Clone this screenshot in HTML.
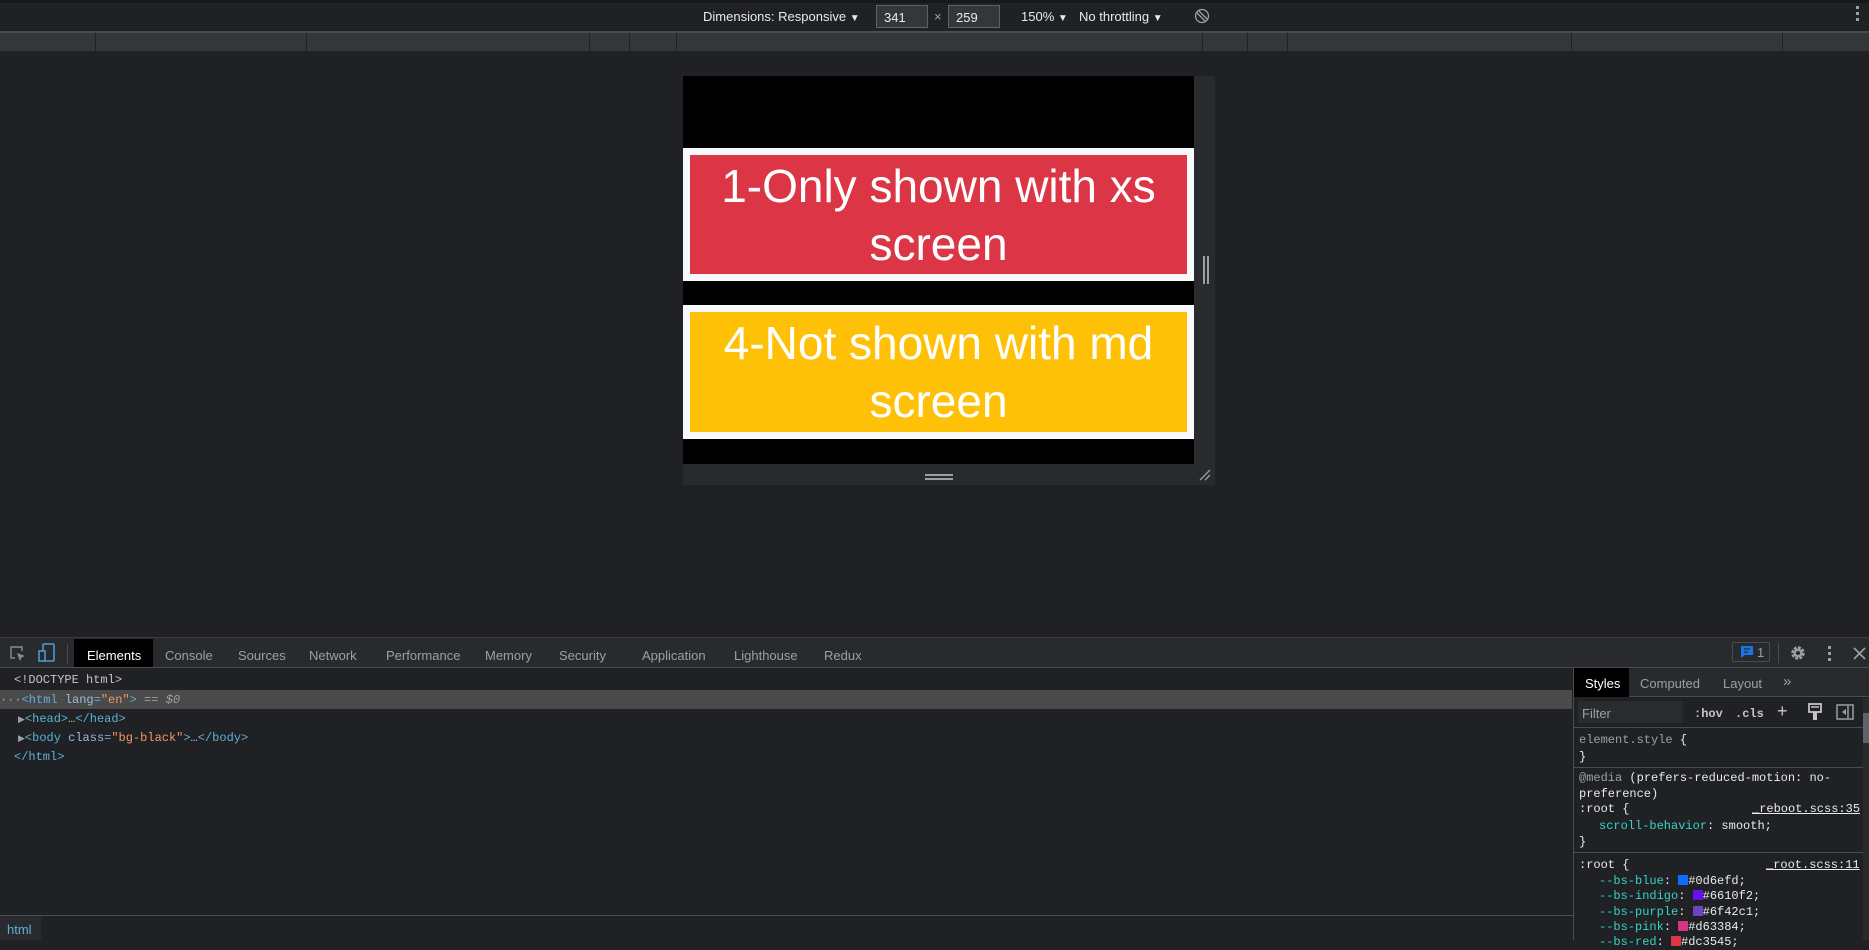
<!DOCTYPE html>
<html><head><style>
*{margin:0;padding:0;box-sizing:border-box}
body{width:1869px;height:940px;background:#202124;position:relative;overflow:hidden;font-family:"Liberation Sans",sans-serif;color:#e8eaed;font-size:13px}
.a{position:absolute;white-space:nowrap}
.m{font-family:"Liberation Mono",monospace;font-size:12px}
.tab{position:absolute;top:648px;color:#9aa0a6;font-size:13px}
.t{color:#5db0d7}.at{color:#9bbbdc}.v{color:#f29766}
.p{color:#35d4c7}
</style></head><body>
<!-- top toolbar -->
<div class="a" style="left:0;top:0;width:1869px;height:3px;background:#17181b"></div>
<div class="a" style="left:0;top:31px;width:1869px;height:2px;background:#494c50"></div>
<div class="a" style="left:703px;top:9px;font-size:13px;color:#e8eaed">Dimensions: Responsive <span style="font-size:10px">▼</span></div>
<div class="a" style="left:876px;top:5px;width:52px;height:23px;background:#35363a;border:1px solid #5f6368;padding:4px 7px;font-size:13px">341</div>
<div class="a" style="left:934px;top:9px;color:#9aa0a6">×</div>
<div class="a" style="left:948px;top:5px;width:52px;height:23px;background:#35363a;border:1px solid #5f6368;padding:4px 7px;font-size:13px">259</div>
<div class="a" style="left:1021px;top:9px">150% <span style="font-size:10px">▼</span></div>
<div class="a" style="left:1079px;top:9px">No throttling <span style="font-size:10px">▼</span></div>
<svg class="a" style="left:1194px;top:8px" width="16" height="16"><circle cx="8" cy="8" r="6.5" fill="none" stroke="#9aa0a6" stroke-width="1.3"/><path d="M3 5 L11 13 M5 3 L13 11" stroke="#9aa0a6" stroke-width="1.3"/></svg>
<div class="a" style="left:1856px;top:6px;width:3px;height:3px;background:#9aa0a6;box-shadow:0 6px 0 #9aa0a6,0 12px 0 #9aa0a6"></div>
<!-- ruler -->
<div class="a" style="left:0;top:33px;width:1869px;height:18px;background:#35363a"></div>
<div class="a" style="left:95px;top:33px;width:1px;height:18px;background:#202124"></div>
<div class="a" style="left:306px;top:33px;width:1px;height:18px;background:#202124"></div>
<div class="a" style="left:589px;top:33px;width:1px;height:18px;background:#202124"></div>
<div class="a" style="left:629px;top:33px;width:1px;height:18px;background:#202124"></div>
<div class="a" style="left:676px;top:33px;width:1px;height:18px;background:#202124"></div>
<div class="a" style="left:1202px;top:33px;width:1px;height:18px;background:#202124"></div>
<div class="a" style="left:1247px;top:33px;width:1px;height:18px;background:#202124"></div>
<div class="a" style="left:1287px;top:33px;width:1px;height:18px;background:#202124"></div>
<div class="a" style="left:1571px;top:33px;width:1px;height:18px;background:#202124"></div>
<div class="a" style="left:1782px;top:33px;width:1px;height:18px;background:#202124"></div>
<!-- viewport -->
<div class="a" style="left:683px;top:76px;width:511px;height:388px;background:#000"></div>
<div class="a" style="left:1194px;top:76px;width:21px;height:409px;background:#292a2d"></div>
<div class="a" style="left:683px;top:464px;width:532px;height:21px;background:#292a2d"></div>
<div class="a" style="left:1203px;top:256px;width:2px;height:28px;background:#9aa0a6;box-shadow:4px 0 0 #9aa0a6"></div>
<div class="a" style="left:925px;top:474px;width:28px;height:2px;background:#9aa0a6;box-shadow:0 4px 0 #9aa0a6"></div>
<svg class="a" style="left:1198px;top:468px" width="14" height="14"><path d="M2 12 L12 2 M7 12 L12 7" stroke="#9aa0a6" stroke-width="1.3"/></svg>
<div class="a" style="left:683px;top:148px;width:511px;height:133px;background:#f8f9fa"></div>
<div class="a" style="left:690px;top:155px;width:497px;height:119px;background:#dc3545;color:#fff;font-size:46px;line-height:58px;text-align:center;white-space:normal;padding:2px 20px 0">1-Only shown with xs screen</div>
<div class="a" style="left:683px;top:305px;width:511px;height:134px;background:#f8f9fa"></div>
<div class="a" style="left:690px;top:312px;width:497px;height:120px;background:#ffc107;color:#fff;font-size:46px;line-height:58px;text-align:center;white-space:normal;padding:2px 4px 0">4-Not shown with md screen</div>
<!-- devtools tab bar -->
<div class="a" style="left:0;top:637px;width:1869px;height:31px;background:#292a2d;border-top:1px solid #3c3c3c;border-bottom:1px solid #494c50"></div>
<svg class="a" style="left:9px;top:645px" width="18" height="18"><path d="M6 13H2V2H13V6" fill="none" stroke="#8a8d91" stroke-width="1.4"/><path d="M8 8 L16 11 L12.5 12.5 L11 16 Z" fill="#8a8d91"/></svg>
<svg class="a" style="left:38px;top:643px" width="18" height="20"><rect x="5" y="1" width="11" height="17" rx="1" fill="none" stroke="#4c9ee0" stroke-width="1.5"/><rect x="1" y="8" width="6" height="10" fill="#292a2d" stroke="#4c9ee0" stroke-width="1.5"/></svg>
<div class="a" style="left:67px;top:644px;width:1px;height:20px;background:#494c50"></div>
<div class="a" style="left:74px;top:639px;width:79px;height:28px;background:#000"></div>
<div class="tab" style="left:87px;color:#fff">Elements</div>
<div class="tab" style="left:165px">Console</div>
<div class="tab" style="left:238px">Sources</div>
<div class="tab" style="left:309px">Network</div>
<div class="tab" style="left:386px">Performance</div>
<div class="tab" style="left:485px">Memory</div>
<div class="tab" style="left:559px">Security</div>
<div class="tab" style="left:642px">Application</div>
<div class="tab" style="left:734px">Lighthouse</div>
<div class="tab" style="left:824px">Redux</div>
<div class="a" style="left:1732px;top:642px;width:38px;height:20px;border:1px solid #494c50;border-radius:2px"></div>
<svg class="a" style="left:1740px;top:645px" width="14" height="14"><path d="M1 1H13V10H5L1 13Z" fill="#1a73e8"/><path d="M4 4H10M4 7H8" stroke="#292a2d" stroke-width="1.3"/></svg>
<div class="a" style="left:1757px;top:645px;color:#9aa0a6">1</div>
<div class="a" style="left:1778px;top:643px;width:1px;height:20px;background:#494c50"></div>
<svg class="a" style="left:1790px;top:645px" width="16" height="16"><circle cx="8" cy="8" r="5" fill="none" stroke="#9aa0a6" stroke-width="3.5" stroke-dasharray="2.6 1.3"/><circle cx="8" cy="8" r="4.5" fill="#9aa0a6"/><circle cx="8" cy="8" r="2" fill="#292a2d"/></svg>
<div class="a" style="left:1828px;top:646px;width:3px;height:3px;background:#9aa0a6;box-shadow:0 6px 0 #9aa0a6,0 12px 0 #9aa0a6"></div>
<svg class="a" style="left:1853px;top:647px" width="13" height="13"><path d="M1 1L12 12M12 1L1 12" stroke="#9aa0a6" stroke-width="1.6"/></svg>
<!-- elements tree -->
<div class="a" style="left:0;top:690px;width:1572px;height:19px;background:#4a4a4a"></div>
<div class="a m" style="left:14px;top:673px;color:#c5c5c5">&lt;!DOCTYPE html&gt;</div>
<div class="a m" style="left:0;top:693px"><span style="color:#9aa0a6">···</span><span class="t">&lt;html </span><span class="at">lang</span><span class="t">=</span><span class="v">"en"</span><span class="t">&gt;</span><span style="color:#9aa0a6"> == <i>$0</i></span></div>
<div class="a m" style="left:18px;top:712px"><span style="color:#9aa0a6;font-size:9px">▶</span><span class="t">&lt;head&gt;</span><span style="color:#c5c5c5">…</span><span class="t">&lt;/head&gt;</span></div>
<div class="a m" style="left:18px;top:731px"><span style="color:#9aa0a6;font-size:9px">▶</span><span class="t">&lt;body </span><span class="at">class</span><span class="t">=</span><span class="v">"bg-black"</span><span class="t">&gt;</span><span style="color:#c5c5c5">…</span><span class="t">&lt;/body&gt;</span></div>
<div class="a m" style="left:14px;top:750px"><span class="t">&lt;/html&gt;</span></div>
<!-- breadcrumb -->
<div class="a" style="left:0;top:915px;width:1573px;height:1px;background:#494c50"></div>
<div class="a" style="left:0;top:916px;width:41px;height:24px;background:#292a2d"></div>
<div class="a" style="left:7px;top:922px;color:#5db0d7">html</div>
<!-- styles pane -->
<div class="a" style="left:1573px;top:668px;width:1px;height:272px;background:#494c50"></div>
<div class="a" style="left:1574px;top:668px;width:295px;height:29px;background:#292a2d;border-bottom:1px solid #494c50"></div>
<div class="a" style="left:1574px;top:668px;width:55px;height:29px;background:#000"></div>
<div class="a" style="left:1585px;top:676px;color:#fff">Styles</div>
<div class="a" style="left:1640px;top:676px;color:#9aa0a6">Computed</div>
<div class="a" style="left:1723px;top:676px;color:#9aa0a6">Layout</div>
<div class="a" style="left:1783px;top:673px;color:#9aa0a6;font-size:15px">»</div>
<div class="a" style="left:1578px;top:701px;width:105px;height:22px;background:#2a2b2e"></div>
<div class="a" style="left:1582px;top:706px;color:#9aa0a6">Filter</div>
<div class="a m" style="left:1694px;top:707px;color:#c5c5c5;font-weight:bold">:hov</div>
<div class="a m" style="left:1735px;top:707px;color:#c5c5c5;font-weight:bold">.cls</div>
<div class="a" style="left:1777px;top:701px;color:#c5c5c5;font-size:18px">+</div>
<svg class="a" style="left:1807px;top:703px" width="16" height="18"><rect x="2" y="1" width="12" height="8" fill="none" stroke="#c5c5c5" stroke-width="1.8"/><path d="M4 4H12" stroke="#c5c5c5" stroke-width="1.5"/><rect x="6" y="9" width="4" height="8" fill="#c5c5c5"/></svg>
<svg class="a" style="left:1836px;top:704px" width="18" height="16"><rect x="1" y="1" width="16" height="14" fill="none" stroke="#9aa0a6" stroke-width="1.5"/><path d="M12 2V14" stroke="#9aa0a6" stroke-width="1.5"/><path d="M10 5L6 8L10 11Z" fill="#9aa0a6"/></svg>
<div class="a" style="left:1574px;top:727px;width:289px;height:1px;background:#494c50"></div>
<div class="a" style="left:1863px;top:698px;width:6px;height:242px;background:#2a2b2e"></div>
<div class="a" style="left:1863px;top:713px;width:6px;height:30px;background:#5f6368"></div>
<div class="a m" style="left:1579px;top:732px;color:#9aa0a6;line-height:17px">element.style <span style="color:#e8eaed">{</span><br><span style="color:#e8eaed">}</span></div>
<div class="a" style="left:1574px;top:767px;width:289px;height:1px;background:#494c50"></div>
<div class="a m" style="left:1579px;top:771px;color:#e8eaed;line-height:15.5px"><span style="color:#9aa0a6">@media</span> (prefers-reduced-motion: no-<br>preference)</div>
<div class="a m" style="left:1579px;top:802px;color:#e8eaed">:root {</div>
<div class="a m" style="left:1752px;top:802px;color:#e8eaed;text-decoration:underline">_reboot.scss:35</div>
<div class="a m" style="left:1599px;top:819px;color:#e8eaed"><span class="p">scroll-behavior</span>: smooth;</div>
<div class="a m" style="left:1579px;top:835px;color:#e8eaed">}</div>
<div class="a" style="left:1574px;top:852px;width:289px;height:1px;background:#494c50"></div>
<div class="a m" style="left:1579px;top:858px;color:#e8eaed">:root {</div>
<div class="a m" style="left:1766px;top:858px;color:#e8eaed;text-decoration:underline">_root.scss:11</div>
<div class="a m" style="left:1599px;top:874px;color:#e8eaed;line-height:15.3px">
<span class="p">--bs-blue</span>: <span style="display:inline-block;width:10px;height:10px;background:#0d6efd;vertical-align:-1px"></span>#0d6efd;<br>
<span class="p">--bs-indigo</span>: <span style="display:inline-block;width:10px;height:10px;background:#6610f2;vertical-align:-1px"></span>#6610f2;<br>
<span class="p">--bs-purple</span>: <span style="display:inline-block;width:10px;height:10px;background:#6f42c1;vertical-align:-1px"></span>#6f42c1;<br>
<span class="p">--bs-pink</span>: <span style="display:inline-block;width:10px;height:10px;background:#d63384;vertical-align:-1px"></span>#d63384;<br>
<span class="p">--bs-red</span>: <span style="display:inline-block;width:10px;height:10px;background:#dc3545;vertical-align:-1px"></span>#dc3545;
</div>
</body></html>
